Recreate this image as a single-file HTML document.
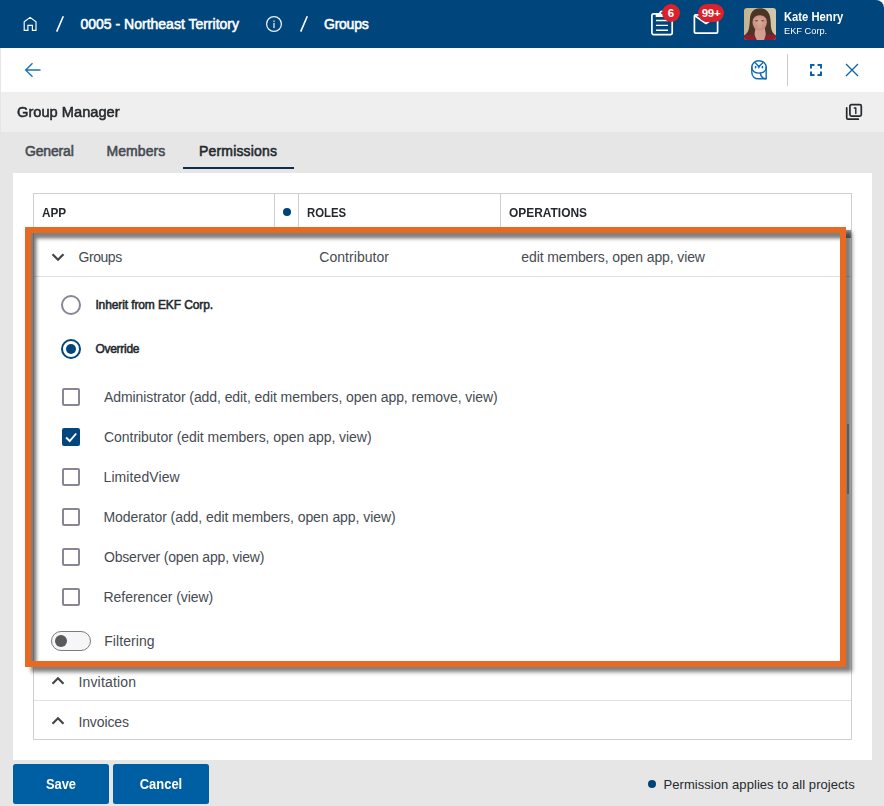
<!DOCTYPE html>
<html lang="en">
<head>
<meta charset="utf-8">
<title>Group Manager - Permissions</title>
<style>
html,body{margin:0;padding:0;}
body{width:884px;height:806px;overflow:hidden;background:#e6e6e6;font-family:"Liberation Sans",Arial,sans-serif;color:#252a2e;position:relative;}
.abs{position:absolute;}
.t{position:absolute;white-space:nowrap;line-height:20px;height:20px;}
.med{font-weight:normal;-webkit-text-stroke:0.55px currentColor;}
#topbar{left:0;top:0;width:884px;height:48px;background:#00457c;}
#corner{left:868px;top:0;width:16px;height:16px;background:#fff;}
#cornerin{left:0;top:0;width:884px;height:48px;background:#00457c;border-top-right-radius:8px;}
#toolbar{left:1px;top:48px;width:883px;height:44px;background:#fff;}
#titlebar{left:1px;top:92px;width:883px;height:40px;background:#efefef;}
#panel{left:13px;top:173px;width:859px;height:587px;background:#fff;}
#tbl{left:33px;top:193px;width:817px;height:545px;border:1px solid #cfcfcf;background:#fff;}
.vline{position:absolute;width:1px;background:#cfcfcf;}
.hline{position:absolute;height:1px;background:#e0e0e0;}
.cb{position:absolute;width:14px;height:14px;border:2px solid #8a8494;border-radius:2px;background:#fff;}
.cb.on{background:#03467e;border-color:#03467e;}
.lbl{color:#464b52;font-size:14px;}
.btn{position:absolute;top:764px;height:40px;background:#005ea2;color:#fff;border-radius:2.5px;}
</style>
</head>
<body>
<!-- top bar -->
<div class="abs" id="corner"></div>
<div class="abs" id="cornerin"></div>
<svg class="abs" style="left:22px;top:16px" width="16" height="16" viewBox="0 0 16 16" fill="none" stroke="#fff" stroke-width="1.15" stroke-linejoin="miter"><path d="M2.2 5.700 L8.100 1.400 L14 5.700 V14.400 H10.400 V9.400 H5.900 V14.400 H2.2 Z"/></svg>
<svg class="abs" style="left:54px;top:14px" width="12" height="20" viewBox="0 0 12 20"><line x1="2.7" y1="17.6" x2="9.3" y2="2.3" stroke="#fff" stroke-width="1.6"/></svg>
<div class="t med" id="bc1" style="left:80.5px;top:14px;font-size:14px;color:#fff;">0005 - Northeast Territory</div>
<svg class="abs" style="left:265px;top:15px" width="18" height="18" viewBox="0 0 18 18" fill="none"><circle cx="9" cy="9" r="7.400" stroke="#eef3f8" stroke-width="1.250"/><rect x="8.200" y="7.900" width="1.600" height="5.200" fill="#bccddc"/><rect x="8.200" y="5.500" width="1.600" height="1.400" fill="#bccddc"/></svg>
<svg class="abs" style="left:298px;top:14px" width="12" height="20" viewBox="0 0 12 20"><line x1="2.7" y1="17.6" x2="9.3" y2="2.3" stroke="#fff" stroke-width="1.6"/></svg>
<div class="t med" id="bc2" style="left:324px;top:14px;font-size:14px;color:#fff;letter-spacing:-0.24px;">Groups</div>

<!-- clipboard icon -->
<svg class="abs" style="left:648px;top:8px" width="28" height="30" viewBox="0 0 28 30" fill="none" stroke="#fff">
<rect x="3.900" y="5.900" width="20.300" height="20.700" rx="1.800" stroke-width="1.700"/>
<path d="M7.700 8.900 V5.400 H11 C11.300 3.600 12.400 2.400 14 2.400 C15.600 2.400 16.700 3.600 17 5.400 H20.300 V8.900 Z" fill="#fff" stroke="none"/>
<circle cx="14" cy="5" r="0.900" fill="#00457c" stroke="none"/>
<path d="M8 12.5 H20 M8 17.400 H20 M8 22.300 H20" stroke-width="1.400"/>
</svg>
<div class="abs" style="left:662px;top:4px;width:18px;height:18px;border-radius:9px;background:#da212c;"></div>
<div class="t" id="bd1" style="left:662px;top:3px;width:18px;text-align:center;font-size:11.5px;font-weight:bold;color:#fff;">6</div>
<!-- envelope icon -->
<svg class="abs" style="left:691px;top:10px" width="30" height="26" viewBox="0 0 30 26" fill="none" stroke="#fff" stroke-width="1.700" stroke-linejoin="round">
<rect x="3.400" y="4.900" width="23.200" height="18.200" rx="1.200"/>
<path d="M3.500 5.500 L15 13.500 L26.500 5.500"/>
</svg>
<div class="abs" style="left:698px;top:4px;width:26px;height:17.600px;border-radius:9px;background:#da212c;"></div>
<div class="t" id="bd2" style="left:698px;top:2.8px;width:26px;text-align:center;font-size:11.5px;font-weight:bold;color:#fff;letter-spacing:-0.3px;">99+</div>

<!-- avatar -->
<svg class="abs" style="left:744px;top:8px" width="32" height="32" viewBox="0 0 32 32">
<defs><clipPath id="avc"><rect x="0" y="0" width="32" height="32" rx="3.2"/></clipPath>
<filter id="avb" x="-10%" y="-10%" width="120%" height="120%"><feGaussianBlur stdDeviation="0.55"/></filter>
<radialGradient id="skin" cx="50%" cy="50%" r="60%"><stop offset="0" stop-color="#e2a896"/><stop offset="1" stop-color="#c48a78"/></radialGradient>
<linearGradient id="avbg" x1="0" x2="1" y1="0" y2="0"><stop offset="0" stop-color="#c4b58f"/><stop offset="1" stop-color="#d2c9ad"/></linearGradient></defs>
<g clip-path="url(#avc)">
<rect width="32" height="32" fill="url(#avbg)"/>
<g filter="url(#avb)">
<path d="M16 0.200 C9 0.200 6.500 5 6 10 C5.600 15 5.500 19 4.500 22 C3.500 25 1.500 26.500 0 27.500 L0 33 L32 33 L32 27.500 C29.500 26 28 24 27.300 21 C26.500 17 27 13 26 8.500 C25 3.500 21.500 0.200 16 0.200 Z" fill="#4c3428"/>
<path d="M-1 33 L-1 28.500 C2 27 6 26.300 9.500 26.600 L12 33 Z" fill="#8f1a31"/>
<path d="M33 33 L33 28.500 C30 27 26 26.300 22.500 26.600 L20.500 33 Z" fill="#8f1a31"/>
<path d="M11.500 20 L10.500 26 C11 29 12.500 31.500 13.500 33 L19.500 33 C20.500 31 21.500 28.500 21.800 26 L20.800 20 Z" fill="#d3a08f"/>
<ellipse cx="15.700" cy="14.200" rx="7.200" ry="8.400" fill="url(#skin)"/>
<path d="M8 12 C8.500 7 11 4.500 15 4.300 C19 4.100 22.500 6 23.600 11.500 C21.500 9 19 7.300 16 7.200 C12.500 7.100 10 9 8 12 Z" fill="#4c3428"/>
<ellipse cx="12.600" cy="12.700" rx="1.600" ry="0.800" fill="#6b5a5c"/>
<ellipse cx="18.700" cy="12.700" rx="1.600" ry="0.800" fill="#6b5a5c"/>
<path d="M12.800 18.200 Q15.700 20 18.600 18.200" stroke="#b56a66" stroke-width="0.900" fill="none"/>
<path d="M13.500 18.500 Q15.700 19.600 17.900 18.500" stroke="#f0dcd6" stroke-width="0.600" fill="none"/>
</g>
</g></svg>
<div class="t" id="un" style="left:784px;top:6.5px;font-size:12px;font-weight:bold;color:#fff;transform:scaleX(0.935);transform-origin:left center;">Kate Henry</div>
<div class="t" id="uc" style="left:784px;top:20.7px;font-size:9.7px;color:#fff;transform:scaleX(0.955);transform-origin:left center;">EKF Corp.</div>

<!-- toolbar -->
<div class="abs" id="toolbar"></div>
<svg class="abs" style="left:22px;top:60px" width="22" height="20" viewBox="0 0 22 20" fill="none" stroke="#1a73b8" stroke-width="1.400"><path d="M18.500 10 H4 M10.500 3.200 L3.700 10 L10.500 16.800"/></svg>
<!-- owl -->
<svg class="abs" style="left:749px;top:58px" width="20" height="24" viewBox="0 0 20 24" fill="none" stroke="#0f6ab3" stroke-width="1.400" stroke-linejoin="round" stroke-linecap="round">
<path d="M10 2.800 C5.500 2.800 2.800 5.800 2.800 9.500 V14.300 C2.800 18.500 5.800 20.800 9.500 20.800 H17.200 V9.500 C17.200 5.800 14.500 2.800 10 2.800 Z"/>
<path d="M2.800 9.300 C2.800 13 6 15.100 10 15.100 C14 15.100 17.200 13 17.200 9.300"/>
<path d="M5.900 4.600 L10 8.500 L14.100 4.600"/>
<path d="M11.300 15.100 C11.600 18 13.200 20.200 16.600 20.800"/>
<path d="M6.600 8.500 V9.700 M13.400 8.500 V9.700" stroke-width="1.600"/>
<path d="M9.300 8.400 H10.700 L10 10 Z" fill="#0f6ab3" stroke-width="0.700"/>
</svg>
<div class="vline" style="left:787px;top:54px;height:32px;background:#cbcbcb;"></div>
<svg class="abs" style="left:808px;top:62px" width="16" height="16" viewBox="0 0 16 16" fill="none" stroke="#0b63ad" stroke-width="2"><path d="M3 6.500 V3 H6.500 M9.500 3 H13 V6.500 M13 9.500 V13 H9.500 M6.500 13 H3 V9.500"/></svg>
<svg class="abs" style="left:844px;top:62px" width="16" height="16" viewBox="0 0 16 16" fill="none" stroke="#0b63ad" stroke-width="1.300"><path d="M2 2 L14 14 M14 2 L2 14"/></svg>

<!-- title bar -->
<div class="abs" id="titlebar"></div>
<div class="t med" id="ttl" style="left:17.3px;top:102.2px;font-size:15.5px;color:#252a2e;transform:scaleX(0.945);transform-origin:left center;">Group Manager</div>
<svg class="abs" style="left:844px;top:102px" width="20" height="20" viewBox="0 0 20 20" fill="none" stroke="#252a2e" stroke-width="1.700" stroke-linejoin="round" stroke-linecap="round">
<rect x="5.900" y="2.700" width="11.400" height="11.400" rx="1.500"/>
<path d="M2.700 5.800 V16 Q2.700 17.200 3.900 17.200 H14.300"/>
<path d="M10.300 6 H11.800 V11.600" stroke-width="1.400"/>
</svg>

<!-- tabs -->
<div class="t med" id="tb1" style="left:25px;top:141px;font-size:14px;color:#464b52;letter-spacing:-0.17px;">General</div>
<div class="t med" id="tb2" style="left:106.5px;top:141px;font-size:14px;color:#464b52;letter-spacing:0.08px;">Members</div>
<div class="t med" id="tb3" style="left:199px;top:141px;font-size:14px;color:#252a2e;letter-spacing:0.17px;">Permissions</div>
<div class="abs" style="left:183px;top:167px;width:111px;height:2px;background:#0e2d4e;"></div>

<!-- panel & table -->
<div class="abs" id="panel"></div>
<div class="abs" id="tbl"></div>
<div class="vline" style="left:274px;top:194px;height:34px;"></div>
<div class="vline" style="left:298px;top:194px;height:34px;"></div>
<div class="vline" style="left:500px;top:194px;height:34px;"></div>
<div class="t" id="h1" style="left:42px;top:203px;font-size:12.5px;font-weight:bold;color:#252a2e;transform:scaleX(0.94);transform-origin:left center;">APP</div>
<div class="abs" style="left:283px;top:208px;width:8px;height:8px;border-radius:4px;background:#00437b;"></div>
<div class="t" id="h2" style="left:307px;top:203px;font-size:12.5px;font-weight:bold;color:#252a2e;transform:scaleX(0.91);transform-origin:left center;">ROLES</div>
<div class="t" id="h3" style="left:509px;top:203px;font-size:12.5px;font-weight:bold;color:#252a2e;transform:scaleX(0.955);transform-origin:left center;">OPERATIONS</div>

<!-- groups row -->
<svg class="abs" style="left:50px;top:250px" width="16" height="14" viewBox="0 0 16 14" fill="none" stroke="#46464a" stroke-width="2.2"><path d="M2.500 4.200 L8 9.700 L13.500 4.200"/></svg>
<div class="t lbl" id="r1a" style="left:78.5px;top:247px;letter-spacing:-0.44px;">Groups</div>
<div class="t lbl" id="r1b" style="left:319.3px;top:247px;letter-spacing:0.04px;">Contributor</div>
<div class="t lbl" id="r1c" style="left:521.3px;top:247px;letter-spacing:-0.115px;">edit members, open app, view</div>
<div class="hline" style="left:34px;top:276px;width:817px;"></div>

<!-- radios -->
<div class="abs" style="left:61px;top:295px;width:16px;height:16px;border:2px solid #8a8494;border-radius:10px;background:#fff;"></div>
<div class="t med" id="rd1" style="left:95.4px;top:295px;font-size:12px;color:#252a2e;letter-spacing:-0.11px;">Inherit from EKF Corp.</div>
<div class="abs" style="left:61px;top:339px;width:16px;height:16px;border:2px solid #00467d;border-radius:10px;background:#fff;"></div>
<div class="abs" style="left:66px;top:344px;width:10px;height:10px;border-radius:5px;background:#00467d;"></div>
<div class="t med" id="rd2" style="left:95.4px;top:339px;font-size:12px;color:#252a2e;letter-spacing:-0.27px;">Override</div>

<!-- checkboxes -->
<div class="cb" style="left:62px;top:388px;"></div>
<div class="t lbl" id="c1" style="left:104px;top:387px;letter-spacing:-0.076px;">Administrator (add, edit, edit members, open app, remove, view)</div>
<div class="cb on" style="left:62px;top:428px;"></div>
<svg class="abs" style="left:62px;top:428px" width="18" height="18" viewBox="0 0 18 18" fill="none" stroke="#fff" stroke-width="1.900"><path d="M4.100 9.500 L7.700 13 L14.200 5.500"/></svg>
<div class="t lbl" id="c2" style="left:104px;top:427px;letter-spacing:-0.04px;">Contributor (edit members, open app, view)</div>
<div class="cb" style="left:62px;top:468px;"></div>
<div class="t lbl" id="c3" style="left:103.5px;top:467px;letter-spacing:0.1px;">LimitedView</div>
<div class="cb" style="left:62px;top:508px;"></div>
<div class="t lbl" id="c4" style="left:103.5px;top:507px;letter-spacing:-0.064px;">Moderator (add, edit members, open app, view)</div>
<div class="cb" style="left:62px;top:548px;"></div>
<div class="t lbl" id="c5" style="left:104px;top:547px;letter-spacing:-0.188px;">Observer (open app, view)</div>
<div class="cb" style="left:62px;top:588px;"></div>
<div class="t lbl" id="c6" style="left:103.5px;top:587px;letter-spacing:-0.044px;">Referencer (view)</div>

<!-- toggle -->
<div class="abs" style="left:51px;top:631px;width:38px;height:18px;border:1px solid #7b7a86;border-radius:10px;background:#f6f6f6;"></div>
<div class="abs" style="left:54.500px;top:635px;width:12px;height:12px;border-radius:6px;background:#5a5a5a;"></div>
<div class="t lbl" id="flt" style="left:104.2px;top:631px;letter-spacing:0.07px;">Filtering</div>

<!-- lower rows -->
<svg class="abs" style="left:50px;top:674px" width="16" height="14" viewBox="0 0 16 14" fill="none" stroke="#46464a" stroke-width="2.2"><path d="M2.500 9.700 L8 4.200 L13.500 9.700"/></svg>
<div class="t lbl" id="r2" style="left:78.4px;top:671.6px;letter-spacing:0.18px;">Invitation</div>
<div class="hline" style="left:34px;top:700px;width:817px;"></div>
<svg class="abs" style="left:50px;top:714px" width="16" height="14" viewBox="0 0 16 14" fill="none" stroke="#46464a" stroke-width="2.2"><path d="M2.500 9.700 L8 4.200 L13.500 9.700"/></svg>
<div class="t lbl" id="r3" style="left:78.4px;top:711.6px;letter-spacing:-0.1px;">Invoices</div>

<!-- highlight frame -->
<div class="abs" style="left:846px;top:230px;width:5px;height:8px;background:linear-gradient(#a8a8a8,#8c8c8c);"></div>
<div class="abs" id="frame" style="left:25px;top:227px;width:809px;height:428px;border:6px solid #e86a22;box-shadow:6px 5px 4px rgba(0,0,0,0.5), inset 5.5px 5.5px 3.5px rgba(0,0,0,0.5);"></div>
<div class="abs" style="left:847px;top:424px;width:2px;height:70px;background:#5a5a5a;"></div>

<!-- footer -->
<div class="btn" style="left:13px;width:96px;"></div>
<div class="t" id="b1" style="left:13px;top:774px;width:96px;text-align:center;font-size:14px;font-weight:bold;color:#fff;transform:scaleX(0.92);">Save</div>
<div class="btn" style="left:113px;width:96px;"></div>
<div class="t" id="b2" style="left:113px;top:774px;width:96px;text-align:center;font-size:14px;font-weight:bold;color:#fff;transform:scaleX(0.925);">Cancel</div>
<div class="abs" style="left:648px;top:780px;width:8px;height:8px;border-radius:4px;background:#00437b;"></div>
<div class="t" id="ft" style="left:663.5px;top:775px;font-size:13px;color:#252a2e;letter-spacing:0.06px;">Permission applies to all projects</div>
</body>
</html>
